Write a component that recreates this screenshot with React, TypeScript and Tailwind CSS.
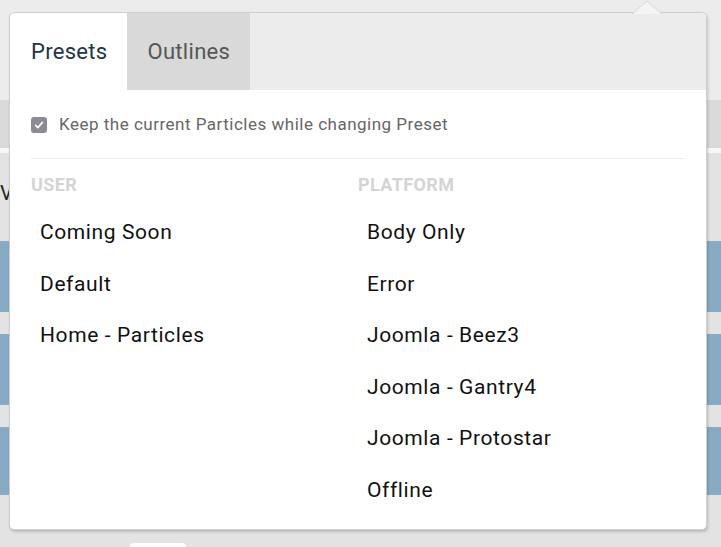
import React from "react";

const userPresets = ["Coming Soon", "Default", "Home - Particles"];
const platformPresets = [
  "Body Only",
  "Error",
  "Joomla - Beez3",
  "Joomla - Gantry4",
  "Joomla - Protostar",
  "Offline",
];

function Background() {
  return (
    <div className="flex h-[547px] w-[721px] flex-col bg-[#e3e3e3]">
      <div className="h-[100px] bg-[#ececec]" />
      <div className="h-[48px] bg-[#dadada]" />
      <div className="h-[5px] bg-[#f7f7f7]" />
      <div className="relative flex flex-1 flex-col">
        <span className="pl-0 pt-[30px] text-[20px] leading-none text-[#222]">V</span>
        <div className="mt-[38px] flex flex-col gap-[22px]">
          <div className="h-[71px] bg-[#88abc5]" />
          <div className="h-[71px] bg-[#88abc5]" />
          <div className="h-[68px] bg-[#88abc5]" />
        </div>
        <div className="ml-[130px] mt-auto h-[4px] w-[56px] rounded-t bg-white" />
      </div>
    </div>
  );
}

function Checkbox() {
  return (
    <span className="flex h-4 w-4 shrink-0 items-center justify-center rounded-[3px] bg-[#8b8b93]">
      <svg viewBox="0 0 16 16" className="h-3 w-3" fill="none" stroke="white" strokeWidth="2.2" strokeLinecap="round" strokeLinejoin="round">
        <path d="M3.5 8.5l3 3 6-7" />
      </svg>
    </span>
  );
}

function Column({ title, items }: { title: string; items: string[] }) {
  return (
    <div className="flex flex-col">
      <div className="h-[24px] text-[18px] font-bold uppercase leading-[24px] tracking-[0.4px] text-[#d4d4d4]">{title}</div>
      <ul className="mt-[10px] flex flex-col">
        {items.map((item) => (
          <li key={item} className="flex h-[51.5px] items-center pl-[9px] text-[21px] tracking-[0.6px] text-[#111]">
            {item}
          </li>
        ))}
      </ul>
    </div>
  );
}

export default function App() {
  return (
    <div className="relative h-[547px] w-[721px] overflow-hidden" style={{ fontFamily: "Roboto, 'Open Sans', sans-serif" }}>
      <Background />

      {/* popover */}
      <div className="absolute left-[9px] top-[12px] h-[518px] w-[698px] rounded-[5px] border border-[#cfcfcf] bg-white shadow-[1px_2px_3px_rgba(0,0,0,0.18)]">
        <svg className="absolute -top-[12px] left-[622px]" width="30" height="13" viewBox="0 0 30 13">
          <path d="M0 13 L15 0 L30 13 Z" fill="#f4f4f4" />
          <path d="M0 13 L15 0 L30 13" fill="none" stroke="#d8d8d8" strokeWidth="1" />
        </svg>

        <div className="flex h-[77px] overflow-hidden rounded-t-[5px] bg-[#ececec]">
          <button className="flex h-full items-center bg-white pl-[21px] pr-[20px] text-[22px] tracking-[0.3px] text-[#233646]">Presets</button>
          <button className="flex h-full items-center bg-[#d9d9d9] px-[20px] text-[22px] tracking-[0.3px] text-[#555]">Outlines</button>
        </div>

        <div className="px-[21px]">
          <label className="mt-[23px] flex h-[24px] items-center gap-[12px] whitespace-nowrap text-[17px] tracking-[0.5px] text-[#666]">
            <Checkbox />
            Keep the current Particles while changing Preset
          </label>
          <div className="mt-[21px] border-t border-[#eeeeee]" />
          <div className="mt-[14px] grid grid-cols-2">
            <Column title="User" items={userPresets} />
            <Column title="Platform" items={platformPresets} />
          </div>
        </div>
      </div>
    </div>
  );
}
